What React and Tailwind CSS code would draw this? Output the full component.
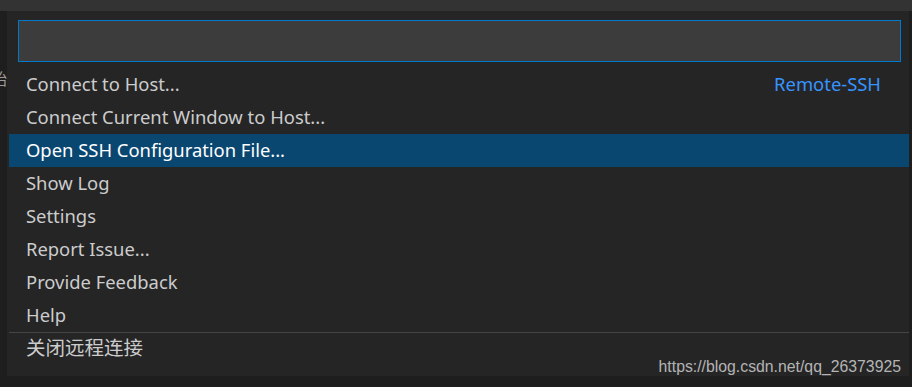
import React from 'react';

const items = [
  'Connect to Host...',
  'Connect Current Window to Host...',
  'Open SSH Configuration File...',
  'Show Log',
  'Settings',
  'Report Issue...',
  'Provide Feedback',
  'Help',
];

const App = () => {
  return (
    <div className="relative w-[912px] h-[387px] bg-[#1e1e1e] flex flex-col overflow-hidden" style={{ fontFamily: '"Noto Sans", "Noto Sans CJK SC", sans-serif' }}>
      {/* top strip */}
      <div className="h-[11px] bg-[#333333] shrink-0" />

      <div className="flex">
        {/* left strip with clipped glyph */}
        <div className="w-[7px] overflow-hidden flex flex-col">
          <div className="h-[56px]" />
          <div className="text-[16px] leading-[24px] text-[#9d9d9d] -ml-[9px]">始</div>
        </div>

        {/* quick pick panel */}
        <div className="w-[902px] h-[365px] bg-[#252526] flex flex-col pt-[9px]">
          <div className="ml-[11px] mr-[8px] h-[42px] bg-[#3c3c3c] border border-[#007acc]" />

          <div className="mt-[6px] ml-[2px] flex flex-col">
            {items.map((label, i) => (
              <div
                key={label}
                className={`h-[33px] flex items-center justify-between pl-[17px] pr-[28px] pb-[2px] text-[18.4px] ${
                  i === 2 ? 'bg-[#094771] text-white' : 'text-[#cccccc]'
                }`}
              >
                <span>{label}</span>
                {i === 0 && <span className="text-[#3794ff]">Remote-SSH</span>}
              </div>
            ))}
            <div className="h-[33px] flex items-center pl-[17px] pb-[2px] text-[19.5px] text-[#cccccc] border-t border-[#454545]">
              关闭远程连接
            </div>
          </div>
        </div>
      </div>

      {/* watermark */}
      <div
        className="absolute right-[11px] bottom-[12px] text-[15.8px] leading-none text-[#b4b4b4]"
        style={{ fontFamily: '"Liberation Sans", Arial, sans-serif' }}
      >
        https://blog.csdn.net/qq_26373925
      </div>
    </div>
  );
};

export default App;
